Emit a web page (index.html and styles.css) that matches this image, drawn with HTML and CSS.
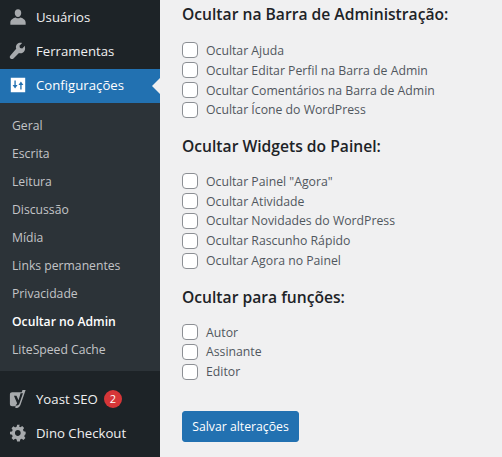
FILE: index.html
```html
<!DOCTYPE html>
<html lang="pt-BR">
<head>
<meta charset="utf-8">
<title>Ocultar no Admin</title>
<link rel="stylesheet" href="styles.css">
</head>
<body>
<aside class="sidebar">
  <a class="item">
    <svg class="icon" viewBox="0 0 20 20"><path d="M10 1.500c2.300 0 3.600 1.800 3.600 4s-1.500 4.600-3.600 4.600S6.400 7.700 6.400 5.500s1.300-4 3.600-4zM1.500 16c0-3 3.500-5 6-5.500 .7 .6 1.600 1 2.500 1s1.800-.4 2.500-1c2.500 .5 6 2.500 6 5.500v2.500h-17z"/></svg>
    <span>Usuários</span>
  </a>
  <a class="item">
    <svg class="icon" viewBox="0 0 20 20"><path d="M17.700 4.300l-3 3-2.500-.6-.6-2.500 3-3c-2-.6-4.200-.2-5.500 1.100-1.400 1.400-1.800 3.400-1.100 5.200L1.600 14.900c-1 1-1 2.500 0 3.400s2.400 1 3.400 0l6.100-6.200c1.800.7 3.800.3 5.200-1.100 1.400-1.400 1.900-3.400 1.400-5.200z"/></svg>
    <span>Ferramentas</span>
  </a>
  <a class="item current">
    <svg class="icon" viewBox="0 0 20 20"><path fill-rule="evenodd" d="M2 2h16v16H2zM6 5v5H4l2.750 4 2.750-4H7.500V5zM12.500 15v-5h-2l2.750-4 2.750 4h-2v5z"/></svg>
    <span>Configurações</span>
  </a>
  <nav class="submenu">
    <a class="sub">Geral</a>
    <a class="sub">Escrita</a>
    <a class="sub">Leitura</a>
    <a class="sub">Discussão</a>
    <a class="sub">Mídia</a>
    <a class="sub">Links permanentes</a>
    <a class="sub">Privacidade</a>
    <a class="sub active">Ocultar no Admin</a>
    <a class="sub">LiteSpeed Cache</a>
  </nav>
  <a class="item yoast">
    <svg class="icon" viewBox="0 0 20 20"><path fill-rule="evenodd" d="M3.500 2.500h10.600l.9-2.500h3.500l-5.700 16.500c-.6 1.700-1.700 3-3.800 3.500H7l.4-2H3.500c-1.500 0-2.500-1-2.500-2.500V5c0-1.500 1-2.500 2.500-2.500zM5.500 6.300l3.500 8.400c-.2.900-.7 1.500-1.500 1.900v1l2.300-.6c1-.5 1.500-1.300 1.900-2.300l3.800-11.200h-2.600l-2.300 8-2.300-5.200z"/></svg>
    <span>Yoast SEO</span>
    <b class="badge">2</b>
  </a>
  <a class="item">
    <svg class="icon" viewBox="0 0 20 20"><path d="M18 11.500v-3l-2.300-.5c-.2-.6-.4-1.100-.7-1.600l1.300-2-2.100-2.100-2 1.300c-.5-.3-1-.5-1.600-.7L11.500 .7h-3L8 3.100c-.6.200-1.100.4-1.600.7l-2-1.300-2.100 2.100 1.300 2c-.3.500-.5 1-.7 1.600L.6 8.500v3l2.300.5c.2.600.4 1.100.7 1.600l-1.300 2 2.100 2.100 2-1.300c.5.300 1 .5 1.600.7l.5 2.300h3l.5-2.300c.6-.2 1.100-.4 1.600-.7l2 1.300 2.100-2.100-1.300-2c.3-.5.500-1 .7-1.600zM9.300 13.200c-1.800 0-3.200-1.400-3.200-3.200s1.400-3.200 3.200-3.200 3.200 1.400 3.200 3.200-1.400 3.200-3.200 3.200z" transform="translate(.5 0)"/></svg>
    <span>Dino Checkout</span>
  </a>
</aside>
<main class="content">
  <h2 class="first">Ocultar na Barra de Administração:</h2>
  <ul class="options">
    <li><input type="checkbox"><label>Ocultar Ajuda</label></li>
    <li><input type="checkbox"><label>Ocultar Editar Perfil na Barra de Admin</label></li>
    <li><input type="checkbox"><label>Ocultar Comentários na Barra de Admin</label></li>
    <li><input type="checkbox"><label>Ocultar Ícone do WordPress</label></li>
  </ul>
  <h2>Ocultar Widgets do Painel:</h2>
  <ul class="options">
    <li><input type="checkbox"><label>Ocultar Painel "Agora"</label></li>
    <li><input type="checkbox"><label>Ocultar Atividade</label></li>
    <li><input type="checkbox"><label>Ocultar Novidades do WordPress</label></li>
    <li><input type="checkbox"><label>Ocultar Rascunho Rápido</label></li>
    <li><input type="checkbox"><label>Ocultar Agora no Painel</label></li>
  </ul>
  <h2>Ocultar para funções:</h2>
  <ul class="options">
    <li><input type="checkbox"><label>Autor</label></li>
    <li><input type="checkbox"><label>Assinante</label></li>
    <li><input type="checkbox"><label>Editor</label></li>
  </ul>
  <button class="save" type="button">Salvar alterações</button>
</main>
</body>
</html>
```
FILE: styles.css
```css
* { box-sizing: border-box; }
html, body { margin: 0; height: 457px; overflow: hidden; }
body {
  display: flex;
  background: #f0f0f1;
  font-family: "Open Sans", "Noto Sans", sans-serif;
  color: #3c434a;
}
.sidebar {
  width: 160px;
  height: 457px;
  flex: none;
  background: #1d2327;
  display: flex;
  flex-direction: column;
}
.item {
  height: 34.4px;
  display: flex;
  align-items: center;
  padding-left: 9px;
  padding-bottom: 1px;
  color: #f0f0f1;
  font-size: 13.200px;
  position: relative;
}
.icon { width: 18px; height: 18px; fill: #a7aaad; margin-right: 9px; flex: none; }
.current { background: #2271b1; color: #fff; }
.current .icon { fill: #fff; }
.current::after {
  content: "";
  position: absolute;
  right: 0;
  top: 50%;
  margin-top: -8px;
  border: 8px solid transparent;
  border-right-color: #f0f0f1;
  border-left-width: 0;
}
.submenu {
  background: #2c3338;
  padding: 8px 0;
  margin-bottom: 11px;
  display: flex;
  flex-direction: column;
}
.sub {
  height: 28px;
  display: flex;
  align-items: center;
  padding-left: 12px;
  font-size: 12.200px;
  color: #c3c4c7;
}
.active { color: #fff; font-weight: 600; }
.badge {
  margin-left: 6px;
  width: 18px;
  height: 18px;
  border-radius: 50%;
  background: #d63638;
  color: #fff;
  font-size: 11px;
  font-weight: 400;
  display: flex;
  align-items: center;
  justify-content: center;
}
.content {
  flex: 1;
  padding-left: 22px;
  display: flex;
  flex-direction: column;
  align-items: flex-start;
}
h2 {
  margin: 15px 0 14.500px;
  font-size: 15.650px;
  line-height: 22px;
  font-weight: 600;
  color: #1d2327;
}
h2.first { margin: 3px 0 15.500px; }
.options { list-style: none; margin: 0; padding: 0; }
.options li { height: 19.850px; display: flex; align-items: center; }
.options input {
  appearance: none;
  width: 16px;
  height: 16px;
  margin: 0 8px 0 0;
  background: #fff;
  border: 1px solid #8c8f94;
  border-radius: 4px;
}
.options label { font-size: 12.250px; color: #50575e; }
.save {
  margin-top: 29.200px;
  width: 117px;
  height: 31px;
  padding: 0;
  border: 1px solid #2271b1;
  border-radius: 3px;
  background: #2271b1;
  color: #fff;
  font: 12.250px "Open Sans", "Noto Sans", sans-serif;
}
```
